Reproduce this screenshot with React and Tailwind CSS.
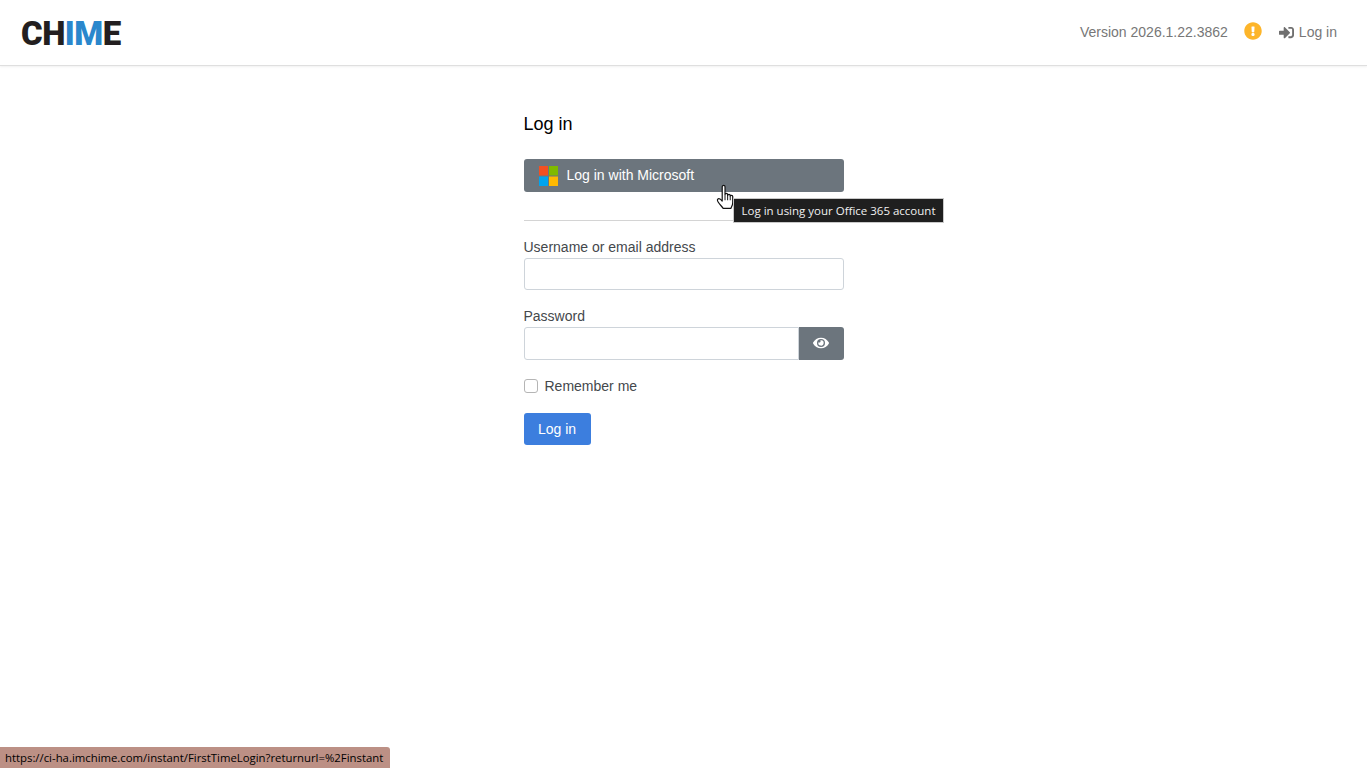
import React from 'react';
import { FaEye, FaSignInAlt, FaExclamationCircle } from 'react-icons/fa';

const MicrosoftLogo = () => (
  <svg width="19" height="20" viewBox="0 0 19 20" className="shrink-0">
    <rect x="0" y="0" width="9" height="9.5" fill="#f25022" />
    <rect x="10" y="0" width="9" height="9.5" fill="#7fba00" />
    <rect x="0" y="10.5" width="9" height="9.5" fill="#00a4ef" />
    <rect x="10" y="10.5" width="9" height="9.5" fill="#ffb900" />
  </svg>
);

const HandCursor = () => (
  <svg width="20" height="26" viewBox="0 0 18 24" className="absolute left-[716px] top-[184px]">
    <path
      d="M5.5 2.5c0-1.6 2.6-1.6 2.6 0v7.2c0-1.3 2.4-1.3 2.4 0v.8c0-1.2 2.4-1.2 2.4 0v.8c0-1.1 2.3-1.1 2.3.2v5.5c0 2.6-1 3.6-1.6 5.5H6.4C5 20.5 3 18.8 1.6 16.4c-.8-1.3-.6-2.3.2-2.7.9-.4 2.2.1 3.7 2V2.5z"
      fill="#fff"
      stroke="#111"
      strokeWidth="1.1"
      strokeLinejoin="round"
    />
    <path d="M8.1 10v5M10.5 10.5V15M12.9 11.3V15" stroke="#111" strokeWidth="0.9" fill="none" />
  </svg>
);

const Header = () => (
  <header className="h-[66px] flex items-center justify-between border-b border-[#dfdfdf] shadow-[0_1px_2px_rgba(0,0,0,0.06)] pl-[21px] pr-[30px]">
    <div className="font-['Roboto',sans-serif] font-black text-[33px] leading-none tracking-[-0.5px] text-[#231f20] pt-[2px]">
      CH<span className="text-[#2a87cc]">IM</span>E
    </div>
    <div className="flex items-center text-[14px] text-[#777] pb-[1px]">
      <span>Version 2026.1.22.3862</span>
      <FaExclamationCircle className="ml-4 mb-[2px] text-[18px] text-[#fdb52a]" />
      <a className="ml-[17px] flex items-center">
        <FaSignInAlt className="text-[15px] mr-[5px] text-[#6f6f6f]" />
        Log in
      </a>
    </div>
  </header>
);

const LoginForm = () => (
  <main className="w-80 mx-auto pt-[47px] text-[14px] text-[#44484c]">
    <h1 className="text-[18px] leading-[22px] text-black">Log in</h1>

    <button className="mt-6 h-[33px] w-full flex items-center rounded-[3px] bg-[#6c757d] pl-[15px] text-white">
      <MicrosoftLogo />
      <span className="ml-[9px]">Log in with Microsoft</span>
    </button>

    <hr className="mt-7 border-[#d4d4d4]" />

    <label className="block mt-[18px] leading-[16px]">Username or email address</label>
    <input className="block mt-[3px] h-[32px] w-full rounded-[3px] border border-[#ced4da] bg-white" />

    <label className="block mt-[18px] leading-[16px]">Password</label>
    <div className="flex mt-[3px] h-[33px]">
      <input className="flex-1 min-w-0 rounded-l-[3px] border border-[#ced4da] bg-white" />
      <button className="w-[45px] flex items-center justify-center rounded-r-[3px] bg-[#6c757d] text-white">
        <FaEye className="text-[16px] mb-[2px]" />
      </button>
    </div>

    <label className="flex items-center mt-[18px] h-[16px]">
      <span className="w-[14px] h-[14px] rounded-[3px] border border-[#b5b5b5] bg-white" />
      <span className="ml-[7px]">Remember me</span>
    </label>

    <button className="mt-[19px] h-[32px] w-[67px] rounded-[3px] bg-[#3c7ede] text-white">Log in</button>
  </main>
);

export default function App() {
  return (
    <div className="relative h-[768px] overflow-hidden bg-white font-['Liberation_Sans',Arial,sans-serif]">
      <Header />
      <LoginForm />

      <HandCursor />

      {/* Tooltip */}
      <div className="absolute left-[733px] top-[198px] h-[25px] w-[211px] flex items-center justify-center border border-[#c9c9c9] bg-[#1f1f1f] pt-[1px] font-['Open_Sans',sans-serif] text-[11.5px] text-[#f0f0f0] whitespace-nowrap">
        Log in using your Office 365 account
      </div>

      {/* Browser status bar */}
      <div className="absolute left-0 bottom-0 h-[21px] w-[390px] flex items-center rounded-tr-[3px] bg-[#bc9085] pl-[5px] font-['Open_Sans',sans-serif] text-[11.35px] text-black whitespace-nowrap">
        https://ci-ha.imchime.com/instant/FirstTimeLogin?returnurl=%2Finstant
      </div>
    </div>
  );
}
